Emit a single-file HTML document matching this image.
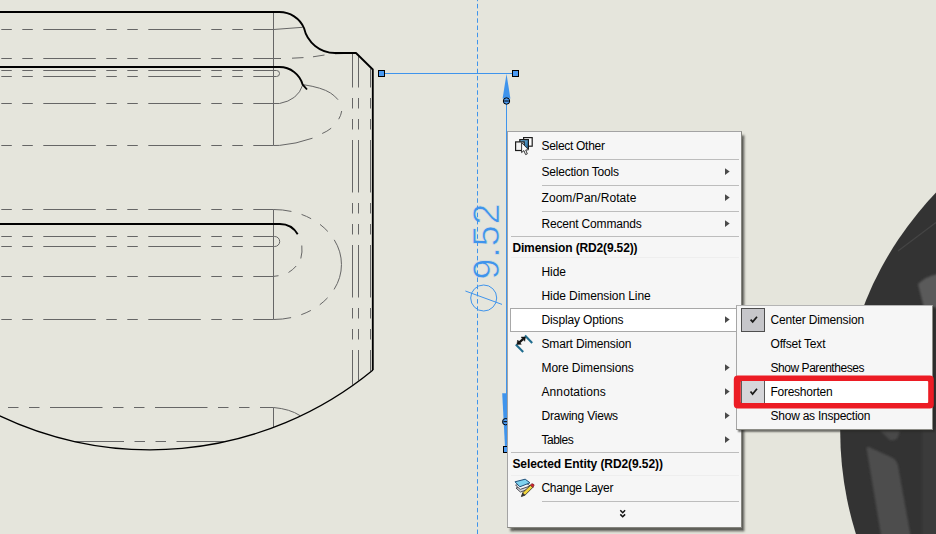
<!DOCTYPE html>
<html lang="en">
<head>
<meta charset="utf-8">
<title>Dimension context menu - Foreshorten</title>
<style>
html,body{margin:0;padding:0;}
body{width:936px;height:534px;overflow:hidden;background:#e5e5dc;position:relative;
  font-family:"Liberation Sans",sans-serif;font-size:12px;color:#000;}
#cad{position:absolute;left:0;top:0;width:936px;height:534px;display:block;}
.menu{position:absolute;background:#f6f6f6;border:1px solid #a3a3a3;border-right-color:#85857f;border-bottom-color:#85857f;box-sizing:border-box;
  box-shadow:2.5px 3.5px 2.2px rgba(45,45,40,.72);}
#main{left:507px;top:131px;width:235px;height:397px;}
#sub{left:736px;top:305px;width:197px;height:125px;border-color:#b4b4b4 #8c8c86 #8c8c86 #a6a6a6;box-shadow:2px 2px 1.5px rgba(40,40,36,.6);}
.it{position:absolute;left:0;white-space:nowrap;height:16px;line-height:16px;}
.it span{display:inline-block;}
.m{left:33.5px;}
.h{left:4.4px;font-weight:bold;}
.s{left:33.5px;}
.sep{position:absolute;height:1px;background:#bdbdbd;left:34px;width:197px;}
.sepw{left:3px;width:228px;}
.arr{position:absolute;left:216.8px;width:6px;height:8px;overflow:visible;}
#hl{position:absolute;left:2px;top:176px;width:228px;height:24px;box-sizing:border-box;background:#fff;border:1px solid #a8a8a8;}
.chk{position:absolute;left:4px;width:24px;height:24px;box-sizing:border-box;background:#c6c6ca;border:1px solid #4e4e4e;}
#red{position:absolute;left:734px;top:375px;width:200px;height:34px;}
svg.ic{position:absolute;overflow:visible;}
</style>
</head>
<body>
<svg id="cad" width="936" height="534" viewBox="0 0 936 534">
<defs><filter id="bl" x="-20%" y="-20%" width="140%" height="140%"><feGaussianBlur stdDeviation="1.3"/></filter><clipPath id="wc"><circle cx="1184.8" cy="431" r="344.6"/></clipPath></defs>
<g id="wheel">
<circle cx="1184.8" cy="431" r="344.6" fill="#333333"/>
<path d="M936,222.5 L898,251" stroke="#454545" stroke-width="1.2" fill="none"/>
<g filter="url(#bl)" clip-path="url(#wc)">
<path d="M918,284 Q926,276 938,274 L938,308 L924,308 Z" fill="#5a5a5a"/>
<path d="M866.5,448 Q868,446 871,448 L893,458 Q897,461 898,466 L911,538 L881.5,538 Z" fill="#4e4e4e"/>
<path d="M880,430 L900,430 L898,437 Q896,441 890,440 Z" fill="#4a4a4a"/>
<rect x="922" y="428" width="16" height="110" fill="#3b3b3b"/>
</g>
</g>
<g fill="none" stroke="#666666" stroke-width="1">
<path d="M-61.7,29.5 H273.5" stroke-dasharray="52.5 10.5 10.5 10.5 10.5 10.5"/>
<path d="M-61.7,58.5 H273.5" stroke-dasharray="52.5 10.5 10.5 10.5 10.5 10.5"/>
<path d="M-61.7,70.5 H273.5" stroke-dasharray="52.5 10.5 10.5 10.5 10.5 10.5"/>
<path d="M-61.7,76.5 H273.5" stroke-dasharray="52.5 10.5 10.5 10.5 10.5 10.5"/>
<path d="M-61.7,103.5 H273.5" stroke-dasharray="52.5 10.5 10.5 10.5 10.5 10.5"/>
<path d="M-61.7,145.5 H273.5" stroke-dasharray="52.5 10.5 10.5 10.5 10.5 10.5"/>
<path d="M-61.7,209.5 H273.5" stroke-dasharray="52.5 10.5 10.5 10.5 10.5 10.5"/>
<path d="M-61.7,236.5 H273.5" stroke-dasharray="52.5 10.5 10.5 10.5 10.5 10.5"/>
<path d="M-61.7,246.5 H273.5" stroke-dasharray="52.5 10.5 10.5 10.5 10.5 10.5"/>
<path d="M-61.7,276.5 H273.5" stroke-dasharray="52.5 10.5 10.5 10.5 10.5 10.5"/>
<path d="M-61.7,319.5 H273.5" stroke-dasharray="52.5 10.5 10.5 10.5 10.5 10.5"/>
<path d="M8,407.5 H273.5" stroke-dasharray="52.5 10.5 10.5 10.5 10.5 10.5" stroke-dashoffset="63"/>
<path d="M75,441.5 H224" stroke-dasharray="52.5 10.5 10.5 10.5 10.5 10.5" stroke-dashoffset="3.5"/>
<path d="M273.5,12 V145.5 M273.5,209.5 V319.5 M273.5,407.5 V426.9"/>
<path d="M352.5,53 V384.8" stroke-dasharray="52.5 10.5 10.5 10.5 10.5 10.5" stroke-dashoffset="18"/>
<path d="M358.5,55.5 V380.4" stroke-dasharray="52.5 10.5 10.5 10.5 10.5 10.5" stroke-dashoffset="20.5"/>
<path d="M370.5,68.6 V371.1" stroke-dasharray="52.5 10.5 10.5 10.5 10.5 10.5" stroke-dashoffset="33.6"/>
<path d="M273.5,29.5 L302.7,27.3"/>
<path d="M273.5,58.5 H281 M292,58.2 L303.5,57.6 M313,56.8 L324.5,55 M335,53.8 L347,53.4"/>
<path d="M273.5,70.5 H276.5 A3,3 0 0 1 276.5,76.5 H273.5"/>
<path d="M302.7,85 Q298,100 279.5,103.5 H273.5"/>
<path d="M303.5,84.7 Q322,87.5 330.5,93 Q335,96 338,99.7"/>
<path d="M341.7,111 Q341,115.5 338.7,119.2 M331.2,128.2 Q327,131.5 322.2,133.5 M312.5,138.2 Q296,144 279.5,145.4 L273.5,145.5"/>
<path d="M273.5,236.5 H274.7 A5,5 0 0 1 274.7,246.5 H273.5"/>
<path id="ell" d="M273.5,209.5 A68,55 0 0 1 273.5,319.5" stroke-dasharray="52.5 10.5 10.5 10.5 10.5 10.5" stroke-dashoffset="34.4"/>
<path d="M301.8,245.5 Q302.6,252 300.8,258.5 M296.2,266 Q293,269.8 288.5,272.5 M278.5,275.7 L273.5,276.4"/>
<path d="M273.5,407.5 Q290,409 300,415.6"/>
</g>
<g fill="none" stroke="#000" stroke-width="1.85" stroke-linejoin="round">
<path d="M-2,12 H279.5 A26.8,26.8 0 0 1 304,28 A32,32 0 0 0 335,53 H356 L372.8,69.5 V370"/>
<path d="M-2,67 H279.5 A24,24 0 0 1 302.7,84.7 L307,89.5"/>
<path d="M-2,224 H279.5 A20.7,20.7 0 0 1 297.7,234.3"/>
</g>
<path d="M373,370 A350.5,350.5 0 0 1 -20,405.7" fill="none" stroke="#000" stroke-width="1.3"/>
<g fill="none" stroke="#3f94ec" stroke-width="1">
<path d="M385,73.5 H512 M506.5,98 V394"/>
<circle cx="483.7" cy="298" r="13"/>
<path d="M465.4,291 L502,304.4"/>
</g>
<polygon points="506.5,74 502.6,98.5 510.4,98.5" fill="#3f94ec"/>
<polygon points="502.2,393.2 510.8,393.2 506.8,447 505,447" fill="#3f94ec"/>
<g fill="#4b9bf3" stroke="#000" stroke-width="1">
<rect x="378.5" y="70.5" width="6" height="6"/><rect x="512.5" y="70.5" width="6" height="6"/>
<rect x="503.5" y="446.5" width="5" height="6"/>
<circle cx="506.5" cy="101" r="3.2"/><path d="M504.2,101 H508.8"/>
<circle cx="505.7" cy="421.7" r="3.2"/><path d="M503.4,421.7 H508"/>
</g>
<text id="dimtxt" transform="translate(498.8,279.4) rotate(-90)" letter-spacing="0.8" font-family="&quot;Liberation Sans&quot;,sans-serif" font-size="37.7" fill="#3f94ec" stroke="#e5e5dc" stroke-width="0.6">9.52</text>
<path d="M477.5,0 V534" fill="none" stroke="#3f94ec" stroke-dasharray="4.5 2.7" stroke-dashoffset="3.3"/>
</svg>
<!--MENU-->
<div class="menu" id="main">
<div id="hl"></div>
<div class="it m" style="top:6px;letter-spacing:-0.300px">Select Other</div>
<div class="it m" style="top:32px;letter-spacing:-0.220px">Selection Tools</div>
<svg class="arr" style="top:36px" width="6" height="8" viewBox="0 0 6 8"><path d="M0,0.2 L4.7,3.6 L0,7 Z" fill="#4a4a4a"/></svg>
<div class="it m" style="top:58px;letter-spacing:0.062px">Zoom/Pan/Rotate</div>
<svg class="arr" style="top:62px" width="6" height="8" viewBox="0 0 6 8"><path d="M0,0.2 L4.7,3.6 L0,7 Z" fill="#4a4a4a"/></svg>
<div class="it m" style="top:84px;letter-spacing:-0.181px">Recent Commands</div>
<svg class="arr" style="top:88px" width="6" height="8" viewBox="0 0 6 8"><path d="M0,0.2 L4.7,3.6 L0,7 Z" fill="#4a4a4a"/></svg>
<div class="it h" style="top:108px;letter-spacing:-0.144px">Dimension (RD2(9.52))</div>
<div class="it m" style="top:132px;letter-spacing:-0.072px">Hide</div>
<div class="it m" style="top:156px;letter-spacing:-0.086px">Hide Dimension Line</div>
<div class="it m" style="top:180px;letter-spacing:-0.143px">Display Options</div>
<svg class="arr" style="top:184px" width="6" height="8" viewBox="0 0 6 8"><path d="M0,0.2 L4.7,3.6 L0,7 Z" fill="#4a4a4a"/></svg>
<div class="it m" style="top:204px;letter-spacing:-0.155px">Smart Dimension</div>
<div class="it m" style="top:228px;letter-spacing:-0.072px">More Dimensions</div>
<svg class="arr" style="top:232px" width="6" height="8" viewBox="0 0 6 8"><path d="M0,0.2 L4.7,3.6 L0,7 Z" fill="#4a4a4a"/></svg>
<div class="it m" style="top:252px;letter-spacing:0.092px">Annotations</div>
<svg class="arr" style="top:256px" width="6" height="8" viewBox="0 0 6 8"><path d="M0,0.2 L4.7,3.6 L0,7 Z" fill="#4a4a4a"/></svg>
<div class="it m" style="top:276px;letter-spacing:-0.212px">Drawing Views</div>
<svg class="arr" style="top:280px" width="6" height="8" viewBox="0 0 6 8"><path d="M0,0.2 L4.7,3.6 L0,7 Z" fill="#4a4a4a"/></svg>
<div class="it m" style="top:300px;letter-spacing:-0.498px">Tables</div>
<svg class="arr" style="top:304px" width="6" height="8" viewBox="0 0 6 8"><path d="M0,0.2 L4.7,3.6 L0,7 Z" fill="#4a4a4a"/></svg>
<div class="it h" style="top:324px;letter-spacing:-0.082px">Selected Entity (RD2(9.52))</div>
<div class="it m" style="top:348px;letter-spacing:-0.316px">Change Layer</div>
<div class="sep" style="top:27px"></div>
<div class="sep" style="top:53px"></div>
<div class="sep" style="top:79px"></div>
<div class="sep sepw" style="top:104px"></div>
<div class="sep sepw" style="top:320px"></div>
<div class="sep" style="top:369px"></div>
<div class="sep sepw" style="top:125px;background:#eeeeee"></div>
<div class="sep sepw" style="top:343px;background:#eeeeee"></div>
<svg class="ic" style="left:7px;top:5px" width="20" height="20" viewBox="515 137 20 20"><defs><linearGradient id="sog" x1="0" y1="0" x2="0.6" y2="1"><stop offset="0" stop-color="#74bce6"/><stop offset="1" stop-color="#2a6c9c"/></linearGradient></defs><g stroke="#1c1c1c" stroke-width="1.2"><rect x="523.6" y="137.6" width="8.6" height="8.6" fill="#fdfdfd"/><rect x="519.8" y="139.6" width="8.6" height="9" fill="url(#sog)"/><rect x="515.6" y="141.9" width="8.6" height="8.6" fill="#f1f1f1"/></g><path d="M521.6,142.6 L521.6,152.6 L523.9,150.6 L525.6,154.6 L527.3,153.9 L525.7,150 L528.6,149.8 Z" fill="#fff" stroke="#222" stroke-width="0.9"/></svg>
<svg class="ic" style="left:7px;top:202px" width="20" height="20" viewBox="515 334 20 20"><g stroke="#1f6c8e" stroke-width="2.1" fill="none"><path d="M515.8,344.6 L523.2,352"/><path d="M525,335.6 L532.2,343"/></g><path d="M519.4,342.3 L523,339.2" stroke="#111" stroke-width="2.2"/><path d="M516.9,344.4 L517.7,340.1 L521.3,344.3 Z M525.5,337 L524.7,341.3 L521.1,337.1 Z" fill="#111" stroke="#111" stroke-width="0.5" stroke-linejoin="round"/></svg>
<svg class="ic" style="left:6px;top:346px" width="22" height="20" viewBox="514 478 22 20"><path d="M516,488 L526,485.4 L530.4,488.6 L520.4,492 Z" fill="#d8d8dc" stroke="#3c3c44" stroke-width="0.9"/><path d="M515.6,485.2 L525.6,482.6 L530.2,486 L520.2,489.4 Z" fill="#f4f4f6" stroke="#3c3c44" stroke-width="0.9"/><path d="M515,481.8 L525.2,479.2 L530,482.8 L519.8,486.8 Z" fill="#7fd2ef" stroke="#1f4f78" stroke-width="1"/><path d="M521.4,496.6 L522.8,492.6 L530.6,485.2 L532.8,487.4 L525.2,495 Z" fill="#f2d53c" stroke="#2a2a2a" stroke-width="0.8"/><path d="M530.4,485 L531.6,483.9 Q533.4,483.4 534.2,485 L533,487.6 Z" fill="#d8232f" stroke="#5a1015" stroke-width="0.6"/><path d="M521.4,496.6 L522.6,492.4 L525.4,495.2 Z" fill="#333"/></svg>
<svg class="ic" style="left:111px;top:377px" width="8" height="10" viewBox="0 0 8 10"><path d="M1.3,1.3 L3.7,3.7 L6.1,1.3 M1.3,5.4 L3.7,7.8 L6.1,5.4" fill="none" stroke="#111" stroke-width="1.5"/></svg>
</div>
<div class="menu" id="sub">
<div class="chk" style="top:2px"></div>
<div class="it s" style="top:6px;letter-spacing:-0.159px">Center Dimension</div>
<div class="it s" style="top:30px;letter-spacing:-0.193px">Offset Text</div>
<div class="it s" style="top:54px;letter-spacing:-0.452px">Show Parentheses</div>
<div class="it s" style="top:102px;letter-spacing:-0.242px">Show as Inspection</div>
<svg class="ic" style="left:12px;top:9px" width="10" height="9" viewBox="0 0 10 9"><path d="M1.6,4.6 L3.7,6.9 L8,1.8" fill="none" stroke="#1a1a1a" stroke-width="1.7"/></svg>
</div>
<div id="red">
<svg class="ic" style="left:0;top:0" width="200" height="34" viewBox="734 375 200 34"><rect x="739" y="379" width="191" height="26" fill="#ffffff"/><rect x="741.5" y="379" width="23" height="26" fill="#d6d6da" stroke="#5a5a5a" stroke-width="1"/><path fill-rule="evenodd" fill="#ec1c24" d="M737.8,375.6 H929.8 A4,4 0 0 1 933.8,379.6 V404.4 A4,4 0 0 1 929.8,408.4 H737.8 A4,4 0 0 1 733.8,404.4 V379.6 A4,4 0 0 1 737.8,375.6 Z M741.8,381.1 A1,1 0 0 0 740.8,382.1 V401.9 A1,1 0 0 0 741.8,402.9 H927.2 A1,1 0 0 0 928.2,401.9 V382.1 A1,1 0 0 0 927.2,381.1 Z"/><path d="M750.5,391.4 L752.6,394.1 L757,388.8" fill="none" stroke="#1a1a1a" stroke-width="1.7"/></svg>
<div class="it" style="left:36.5px;top:9px;letter-spacing:-0.264px">Foreshorten</div>
</div>
<!--/MENU-->
</body>
</html>
